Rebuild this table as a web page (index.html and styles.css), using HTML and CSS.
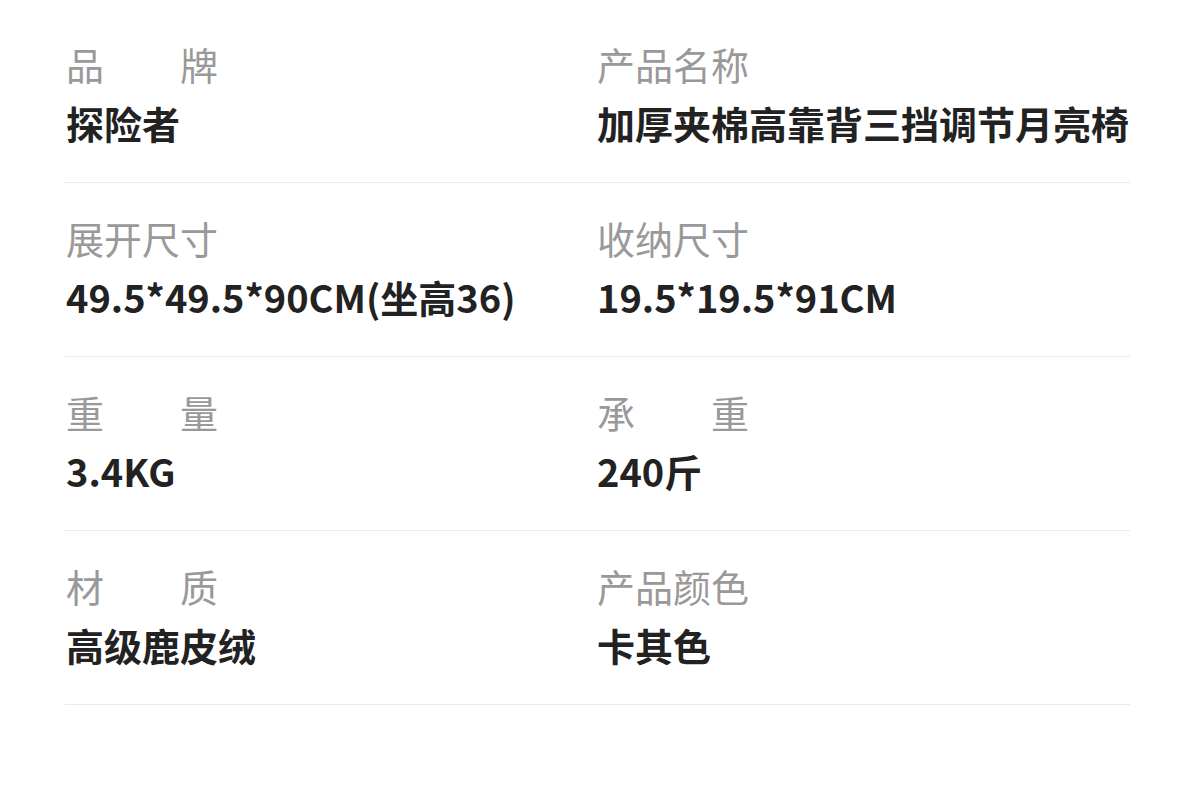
FILE: index.html
```html
<!DOCTYPE html>
<html lang="zh">
<head>
<meta charset="utf-8">
<link rel="stylesheet" href="styles.css">
</head>
<body>
<div class="specs">
  <div class="row">
    <div class="cell"><div class="label just">品牌</div><div class="value">探险者</div></div>
    <div class="cell"><div class="label">产品名称</div><div class="value">加厚夹棉高靠背三挡调节月亮椅</div></div>
  </div>
  <div class="row">
    <div class="cell"><div class="label">展开尺寸</div><div class="value">49.5*49.5*90CM(坐高36)</div></div>
    <div class="cell"><div class="label">收纳尺寸</div><div class="value">19.5*19.5*91CM</div></div>
  </div>
  <div class="row">
    <div class="cell"><div class="label just">重量</div><div class="value">3.4KG</div></div>
    <div class="cell"><div class="label just">承重</div><div class="value">240斤</div></div>
  </div>
  <div class="row">
    <div class="cell"><div class="label just">材质</div><div class="value">高级鹿皮绒</div></div>
    <div class="cell"><div class="label">产品颜色</div><div class="value">卡其色</div></div>
  </div>
</div>
</body>
</html>
```
FILE: styles.css
```css
html, body {
  margin: 0;
  padding: 0;
  background: #ffffff;
}
body {
  font-family: "Noto Sans CJK SC", "Noto Sans", sans-serif;
  width: 1200px;
  height: 804px;
  overflow: hidden;
}
.specs {
  padding: 9px 70px 0 65px;
}
.row {
  display: grid;
  grid-template-columns: 531px 1fr;
  padding: 36px 0 40px;
  border-bottom: 1px solid #ebebeb;
}
.cell {
  display: flex;
  flex-direction: column;
  gap: 21px;
  padding-left: 1px;
}
.label {
  font-size: 38px;
  line-height: 38px;
  color: #999999;
  font-weight: 400;
}
.label.just {
  width: 4em;
  text-align: justify;
  text-align-last: justify;
}
.value {
  font-size: 38px;
  line-height: 38px;
  color: #222222;
  font-weight: 700;
  white-space: nowrap;
}
```
